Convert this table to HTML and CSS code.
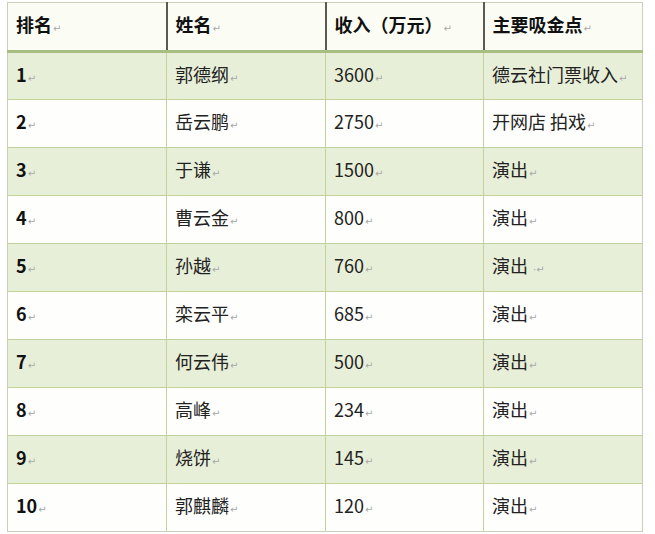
FILE: index.html
```html
<!DOCTYPE html>
<html lang="zh">
<head>
<meta charset="utf-8">
<title>收入排名</title>
<link rel="stylesheet" href="styles.css">
</head>
<body>
<table class="rank">
  <colgroup>
    <col class="c1"><col class="c2"><col class="c3"><col class="c4">
  </colgroup>
  <thead>
    <tr>
      <th>排名<span class="pm">↵</span></th>
      <th>姓名<span class="pm">↵</span></th>
      <th>收入（万元）<span class="pm">↵</span></th>
      <th>主要吸金点<span class="pm">↵</span></th>
    </tr>
  </thead>
  <tbody>
    <tr class="odd"><td class="num">1<span class="pm">↵</span></td><td>郭德纲<span class="pm">↵</span></td><td>3600<span class="pm">↵</span></td><td>德云社门票收入<span class="pm">↵</span></td></tr>
    <tr><td class="num">2<span class="pm">↵</span></td><td>岳云鹏<span class="pm">↵</span></td><td>2750<span class="pm">↵</span></td><td>开网店 拍戏<span class="pm">↵</span></td></tr>
    <tr class="odd"><td class="num">3<span class="pm">↵</span></td><td>于谦<span class="pm">↵</span></td><td>1500<span class="pm">↵</span></td><td>演出<span class="pm">↵</span></td></tr>
    <tr><td class="num">4<span class="pm">↵</span></td><td>曹云金<span class="pm">↵</span></td><td>800<span class="pm">↵</span></td><td>演出<span class="pm">↵</span></td></tr>
    <tr class="odd"><td class="num">5<span class="pm">↵</span></td><td>孙越<span class="pm">↵</span></td><td>760<span class="pm">↵</span></td><td>演出 <span class="pm">·↵</span></td></tr>
    <tr><td class="num">6<span class="pm">↵</span></td><td>栾云平<span class="pm">↵</span></td><td>685<span class="pm">↵</span></td><td>演出<span class="pm">↵</span></td></tr>
    <tr class="odd"><td class="num">7<span class="pm">↵</span></td><td>何云伟<span class="pm">↵</span></td><td>500<span class="pm">↵</span></td><td>演出<span class="pm">↵</span></td></tr>
    <tr><td class="num">8<span class="pm">↵</span></td><td>高峰<span class="pm">↵</span></td><td>234<span class="pm">↵</span></td><td>演出<span class="pm">↵</span></td></tr>
    <tr class="odd"><td class="num">9<span class="pm">↵</span></td><td>烧饼<span class="pm">↵</span></td><td>145<span class="pm">↵</span></td><td>演出<span class="pm">↵</span></td></tr>
    <tr><td class="num">10<span class="pm">↵</span></td><td>郭麒麟<span class="pm">↵</span></td><td>120<span class="pm">↵</span></td><td>演出<span class="pm">↵</span></td></tr>
  </tbody>
</table>
</body>
</html>
```
FILE: styles.css
```css
html, body {
  margin: 0;
  padding: 0;
  background: #ffffff;
}
body {
  padding: 2px 0 0 7px;
  font-family: "Noto Sans CJK SC", "Noto Sans", sans-serif;
  color: #1e1e1e;
}
.rank {
  border-collapse: collapse;
  table-layout: fixed;
  width: 635px;
  border: 1px solid #c9cfbd;
}
.c1 { width: 159px; }
.c2 { width: 159px; }
.c3 { width: 158px; }
.c4 { width: 159px; }

.rank th,
.rank td {
  text-align: left;
  vertical-align: middle;
  padding: 0 0 0 8px;
  font-size: 18px;
  line-height: 24px;
  white-space: nowrap;
}
.rank thead tr {
  height: 49px;
  background: #fbfcf4;
}
.rank th {
  font-weight: 700;
  color: #111;
  border-right: 2px solid #5a5a52;
  border-bottom: 3px solid #a7bf82;
}
.rank th:last-child {
  border-right: 1px solid #c9cfbd;
}
.rank tbody tr {
  height: 48px;
  background: #fefefc;
}
.rank tbody tr.odd {
  background: #e8efd8;
}
.rank td {
  font-weight: 400;
  color: #222;
  border-right: 1px solid #c2d29c;
  border-bottom: 1px solid #c2d29c;
}
.rank td:last-child {
  border-right: 1px solid #c9cfbd;
}
.rank tbody tr:last-child td {
  border-bottom: 1px solid #c9cfbd;
}
.rank td.num {
  font-weight: 700;
  color: #111;
}
.pm {
  font-family: "DejaVu Sans", sans-serif;
  font-size: 10px;
  font-weight: 400;
  color: #a8a8a8;
  margin-left: 1px;
}
```
